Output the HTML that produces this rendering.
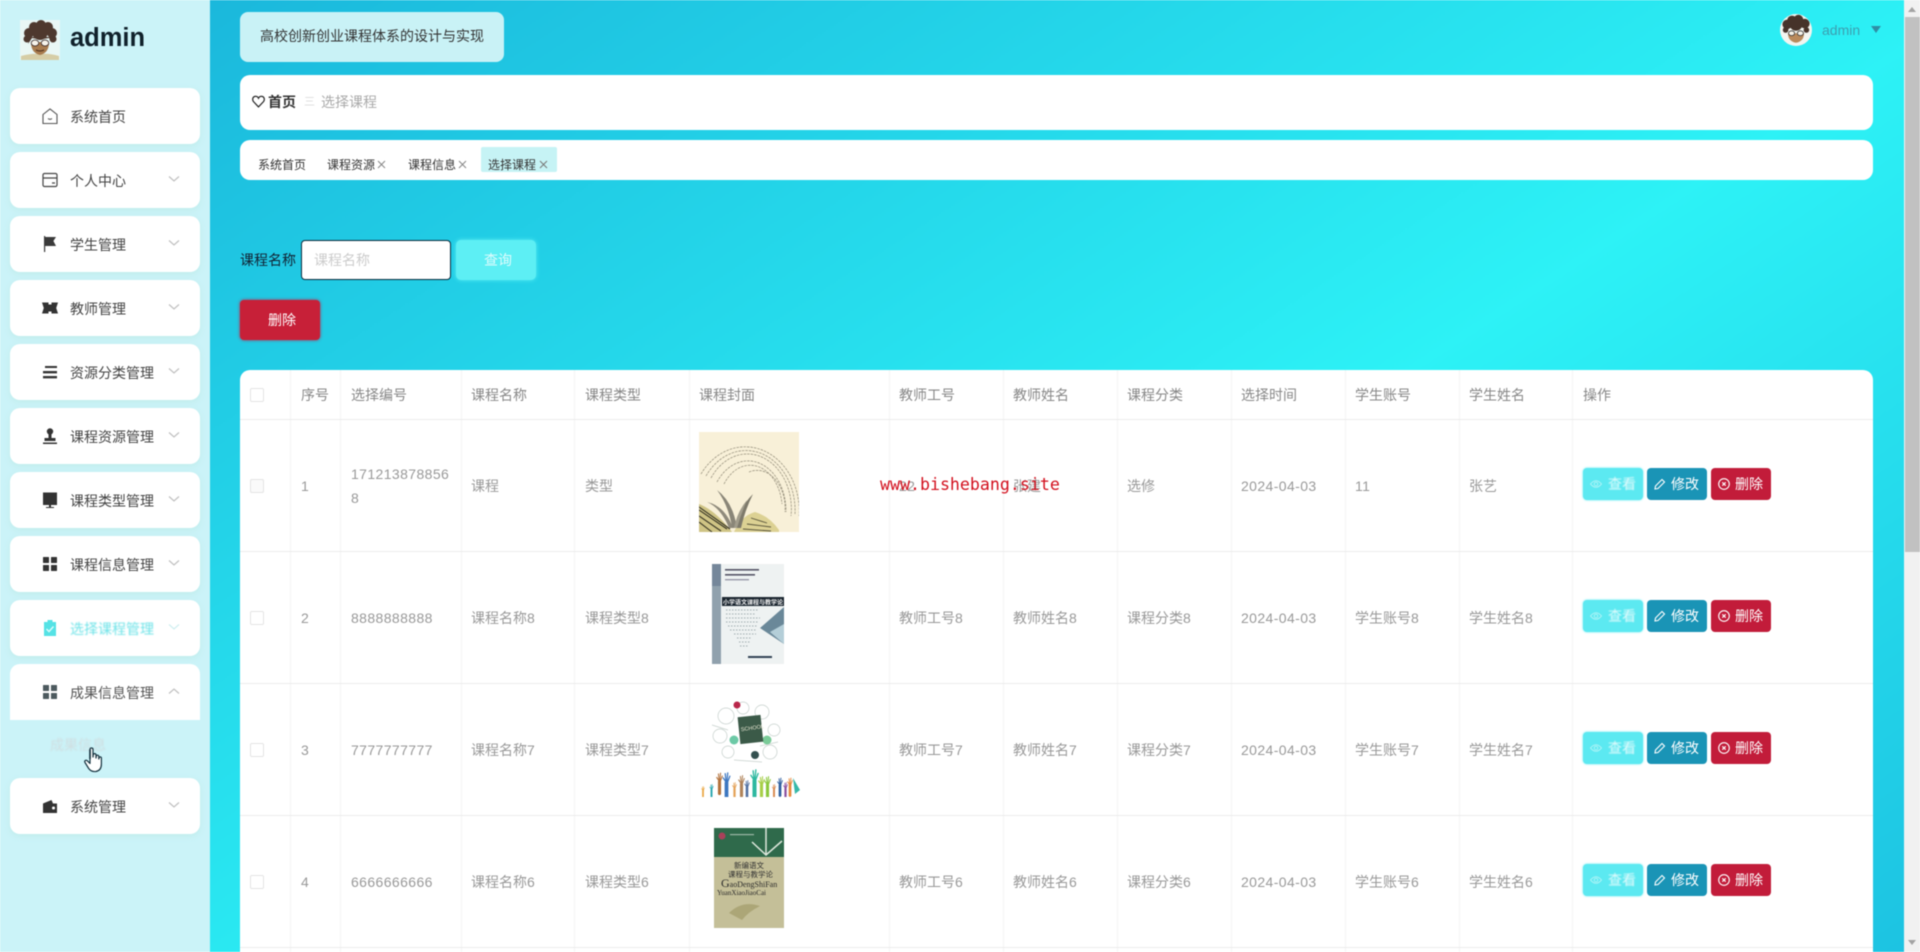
<!DOCTYPE html>
<html lang="zh-CN">
<head>
<meta charset="utf-8">
<title>选择课程</title>
<style>
html,body{margin:0;padding:0;width:1920px;height:952px;overflow:hidden;background:#fff}
*{box-sizing:border-box}
body{font-family:"Liberation Sans","Noto Sans CJK SC",sans-serif;font-size:14px;color:#333}
#wrap{position:absolute;left:0;top:0;width:1920px;height:952px;overflow:hidden;filter:blur(.45px)}
.a{position:absolute;white-space:nowrap}
#main{position:absolute;left:210px;top:0;width:1694px;height:952px;background:linear-gradient(147deg,#1bb8dc 0%,#2df2f6 56%,#1dc3e2 100%)}
#side{position:absolute;left:0;top:0;width:210px;height:952px;background:#cbf3f8}
.card{position:absolute;left:10px;width:190px;height:56px;background:#fff;border-radius:10px;box-shadow:0 2px 6px rgba(190,235,232,.8)}
.card .l{position:absolute;left:60px;top:1px;line-height:56px;color:#444;white-space:nowrap}
.card svg.i{position:absolute;left:32px;top:20px;width:16px;height:16px}
.card svg.c{position:absolute;left:158px;top:23px;width:12px;height:8px}
.panel{position:absolute;background:#fff;border-radius:10px}
.tag{position:absolute;top:157px;font-size:12px;line-height:16px;color:#333;white-space:nowrap}
.x{position:absolute;top:160px;width:9px;height:9px}
#table{position:absolute;left:240px;top:370px;width:1633px;height:582px;background:#fff;border-radius:10px 10px 0 0}
.v{position:absolute;top:0;bottom:0;width:1px;background:#f4f4f4}
.h{position:absolute;left:0;right:0;height:1px;background:#ececec}
.th{position:absolute;top:1px;line-height:49px;color:#888;white-space:nowrap}
.td{position:absolute;line-height:133px;color:#999;white-space:nowrap}
.n{letter-spacing:.4px}
.cb{position:absolute;left:10px;width:14px;height:14px;border:1px solid #e4e4e4;border-radius:2px;background:#fff}
.btn{position:absolute;width:60px;height:32px;border-radius:4px;color:#fff;line-height:32px;white-space:nowrap}
.btn svg{position:absolute;left:7px;top:10px;width:12px;height:12px}
.btn span{position:absolute;left:24px;top:0}
.b1{left:1343px;background:#5ce9f1;box-shadow:0 0 2px #5ce9f1}
.b1 span{left:25px;opacity:.85;filter:blur(.5px)}
.b2{left:1407px;background:#1a94b6}
.b3{left:1471px;background:#c21c3a}
.cover{position:absolute}
</style>
</head>
<body>
<div id="wrap">

<div id="main"></div>

<!-- sidebar -->
<div id="side">
  <svg class="a" style="left:20px;top:20px" width="40" height="40" viewBox="0 0 40 40">
    <rect width="40" height="40" fill="#e9f7f5"/>
    <path d="M1 40 V36 Q12 33 20 34 Q29 33 39 36 V40Z" fill="#d6cda6"/>
    <path d="M11 22 Q11 33 20 35 Q29 33 29 22Z" fill="#a87c4f"/>
    <g fill="#4e382e">
      <circle cx="9" cy="13" r="5"/><circle cx="14" cy="7" r="5"/><circle cx="21" cy="5" r="5"/><circle cx="28" cy="7" r="5"/><circle cx="32" cy="13" r="5"/><circle cx="20" cy="12" r="8"/>
      <circle cx="7" cy="19" r="3.500"/><circle cx="33" cy="19" r="3.500"/>
    </g>
    <path d="M8 24 12 18 Q20 20 29 18 L32 23 30 17 H10Z" fill="#4e382e"/>
    <ellipse cx="15" cy="23" rx="3.800" ry="3" fill="#f6f3ea" stroke="#322" stroke-width=".8"/>
    <ellipse cx="25" cy="23" rx="3.800" ry="3" fill="#f6f3ea" stroke="#322" stroke-width=".8"/>
    <path d="M16 30 Q20 32 24 30" stroke="#4d2f1c" fill="none"/>
  </svg>
  <div class="a" style="left:70px;top:20px;line-height:36px;font-size:25.5px;font-weight:bold;color:#10212b">admin</div>

  <div class="card" style="top:88px"><svg class="i" viewBox="0 0 16 16" fill="none" stroke="#555" stroke-width="1.100"><path d="M1 6.500 8 1l7 5.500V15.500H1z"/><path d="M6 10.500q2 1.600 4 0"/></svg><div class="l">系统首页</div></div>

  <div class="card" style="top:152px"><svg class="i" viewBox="0 0 16 16" fill="none" stroke="#444" stroke-width="1.200"><rect x="1" y="1.500" width="14" height="13" rx="1.500"/><path d="M1 6h14M10 11h3"/></svg><div class="l">个人中心</div><svg class="c" viewBox="0 0 12 8" fill="none" stroke="#c0c0c0" stroke-width="1.200"><path d="M1 1.500 6 6l5-4.500"/></svg></div>

  <div class="card" style="top:216px"><svg class="i" viewBox="0 0 16 16" fill="#3a3a3a"><path d="M2 0h1.200v16H2z"/><path d="M3 1h11l-2.600 4L14 10H3z"/></svg><div class="l">学生管理</div><svg class="c" viewBox="0 0 12 8" fill="none" stroke="#c0c0c0" stroke-width="1.200"><path d="M1 1.500 6 6l5-4.500"/></svg></div>

  <div class="card" style="top:280px"><svg class="i" viewBox="0 0 16 16" fill="#333"><path d="M0 2.500h6.500v2h3v-2H16l-1.800 5.500L16 13.500H9.500v-2h-3v2H0L1.800 8z"/></svg><div class="l">教师管理</div><svg class="c" viewBox="0 0 12 8" fill="none" stroke="#c0c0c0" stroke-width="1.200"><path d="M1 1.500 6 6l5-4.500"/></svg></div>

  <div class="card" style="top:344px"><svg class="i" viewBox="0 0 16 16" fill="#333"><path d="M3 2h12v2H3zM1 7h14v2.400H1zM1 12h14v2.400H1z"/></svg><div class="l">资源分类管理</div><svg class="c" viewBox="0 0 12 8" fill="none" stroke="#c0c0c0" stroke-width="1.200"><path d="M1 1.500 6 6l5-4.500"/></svg></div>

  <div class="card" style="top:408px"><svg class="i" viewBox="0 0 16 16" fill="#333"><circle cx="8" cy="3.500" r="3.200"/><path d="M6.500 5h3v5h4v3H2.500v-3h4zM1 14.500h14V16H1z"/></svg><div class="l">课程资源管理</div><svg class="c" viewBox="0 0 12 8" fill="none" stroke="#c0c0c0" stroke-width="1.200"><path d="M1 1.500 6 6l5-4.500"/></svg></div>

  <div class="card" style="top:472px"><svg class="i" viewBox="0 0 16 16" fill="#333"><path d="M1 .5h14V13H1zM4 15h8v1H4z"/><path d="M7 13h2v2H7z"/></svg><div class="l">课程类型管理</div><svg class="c" viewBox="0 0 12 8" fill="none" stroke="#c0c0c0" stroke-width="1.200"><path d="M1 1.500 6 6l5-4.500"/></svg></div>

  <div class="card" style="top:536px"><svg class="i" viewBox="0 0 16 16" fill="#333"><rect x="1" y="1" width="6" height="6" rx=".5"/><rect x="9" y="1" width="6" height="6" rx=".5"/><rect x="1" y="9" width="6" height="6" rx=".5"/><rect x="9" y="9" width="6" height="6" rx=".5"/></svg><div class="l">课程信息管理</div><svg class="c" viewBox="0 0 12 8" fill="none" stroke="#c0c0c0" stroke-width="1.200"><path d="M1 1.500 6 6l5-4.500"/></svg></div>

  <div class="card" style="top:600px"><svg class="i" viewBox="0 0 16 16" fill="#55e2e5"><path d="M2 2h3.500V0h5v2H14v14H2z"/><path d="M4.500 9l2.500 2.500 4.500-5" fill="none" stroke="#d8fbfb" stroke-width="1.500"/></svg><div class="l" style="color:#6ee3e8;filter:blur(.6px)">选择课程管理</div><svg class="c" viewBox="0 0 12 8" fill="none" stroke="#cfeef0" stroke-width="1.200"><path d="M1 1.500 6 6l5-4.500"/></svg></div>

  <div class="card" style="top:664px;border-radius:10px 10px 0 0;box-shadow:none"><svg class="i" viewBox="0 0 16 16" fill="#4d5a5f"><rect x="1" y="1" width="6" height="6" rx=".5"/><rect x="9" y="1" width="6" height="6" rx=".5"/><rect x="1" y="9" width="6" height="6" rx=".5"/><rect x="9" y="9" width="6" height="6" rx=".5"/></svg><div class="l" style="color:#555">成果信息管理</div><svg class="c" viewBox="0 0 12 8" fill="none" stroke="#c0c0c0" stroke-width="1.200"><path d="M1 6.500 6 2l5 4.500"/></svg></div>

  <div class="a" style="left:50px;top:735px;line-height:20px;color:#cfdde0;filter:blur(.8px)">成果信息</div>

  <div class="card" style="top:778px"><svg class="i" viewBox="0 0 16 16" fill="#333"><path d="M1 5.500 9.500 2l1.500 3.500h4V15H1z"/><circle cx="11.500" cy="10" r="1.500" fill="#fff"/></svg><div class="l">系统管理</div><svg class="c" viewBox="0 0 12 8" fill="none" stroke="#c0c0c0" stroke-width="1.200"><path d="M1 1.500 6 6l5-4.500"/></svg></div>

  <svg class="a" style="left:84px;top:747px" width="21" height="26" viewBox="0 0 21 26">
    <path d="M6 2.500Q6 1 7.500 1T9 2.500V10l.3-2.400q.2-1.100 1.400-1t1.300 1.200V11l.3-2q.3-1 1.400-.8t1.100 1.300V12l.4-1.400q.4-.9 1.300-.7t.9 1.200V17q0 6.500-5.500 7.500-4.500.6-7.200-3L1 15.500q-.7-1.300.3-2t2.200.4L6 16.500z" fill="#fff" stroke="#14323f" stroke-width="1.200" stroke-linejoin="round"/>
    <path d="M6 2.500V12" stroke="#14323f" stroke-width="1.600"/>
  </svg>
</div>

<!-- title -->
<div class="a" style="left:240px;top:12px;width:264px;height:50px;background:#c9f2f6;border-radius:8px;line-height:49px;padding-left:20px;color:#333">高校创新创业课程体系的设计与实现</div>

<!-- user -->
<svg class="a" style="left:1780px;top:14px" width="32" height="32" viewBox="0 0 40 40">
  <defs><clipPath id="cc"><circle cx="20" cy="20" r="20"/></clipPath></defs>
  <g clip-path="url(#cc)">
  <rect width="40" height="40" fill="#f3f5f0"/>
  <path d="M10 24 Q10 34 20 36 Q30 34 30 24Z" fill="#b98a5c"/>
  <g fill="#46332a"><circle cx="9" cy="13" r="6"/><circle cx="15" cy="8" r="6"/><circle cx="23" cy="7" r="6"/><circle cx="31" cy="12" r="6"/><circle cx="20" cy="13" r="8"/><circle cx="7" cy="20" r="3.500"/><circle cx="33" cy="20" r="3.500"/></g>
  <ellipse cx="14.500" cy="24" rx="3.800" ry="3" fill="#f4f1e8" stroke="#333"/>
  <ellipse cx="25.500" cy="24" rx="3.800" ry="3" fill="#f4f1e8" stroke="#333"/>
  </g>
</svg>
<div class="a" style="left:1822px;top:20px;line-height:20px;color:#3c9fb0">admin</div>
<svg class="a" style="left:1871px;top:26px" width="10" height="7" viewBox="0 0 10 7"><path d="M0 0h10L5 7z" fill="#2f8ea5"/></svg>

<!-- breadcrumb -->
<div class="panel" style="left:240px;top:75px;width:1633px;height:55px"></div>
<svg class="a" style="left:252px;top:95px" width="13" height="13" viewBox="0 0 24 24" fill="none" stroke="#222" stroke-width="2.200"><path d="M12 22 3 12.500C0 9 1 3 6 2.500c3-.3 5 1.500 6 3.500 1-2 3-3.800 6-3.500 5 .5 6 6.500 3 10z"/></svg>
<div class="a" style="left:268px;top:92px;line-height:20px;font-weight:bold;color:#333">首页</div>
<div class="a" style="left:304px;top:92px;line-height:20px;font-size:11px;color:#ddd">三</div>
<div class="a" style="left:321px;top:92px;line-height:20px;color:#aaa">选择课程</div>

<!-- tags -->
<div class="panel" style="left:240px;top:140px;width:1633px;height:40px"></div>
<div class="a" style="left:481px;top:147px;width:76px;height:25px;background:#c6f3f5;border-radius:2px"></div>
<div class="tag" style="left:258px">系统首页</div>
<div class="tag" style="left:327px">课程资源</div>
<svg class="x" style="left:377px" viewBox="0 0 9 9" stroke="#888" fill="none"><path d="M1 1l7 7M8 1 1 8"/></svg>
<div class="tag" style="left:408px">课程信息</div>
<svg class="x" style="left:458px" viewBox="0 0 9 9" stroke="#888" fill="none"><path d="M1 1l7 7M8 1 1 8"/></svg>
<div class="tag" style="left:488px">选择课程</div>
<svg class="x" style="left:539px" viewBox="0 0 9 9" stroke="#777" fill="none"><path d="M1 1l7 7M8 1 1 8"/></svg>

<!-- search -->
<div class="a" style="left:240px;top:250px;line-height:20px;color:#123">课程名称</div>
<div class="a" style="left:301px;top:240px;width:150px;height:40px;background:#fff;border:1px solid #0b2c3e;border-radius:4px;line-height:38px;padding-left:12px;color:#ccc">课程名称</div>
<div class="a" style="left:456px;top:240px;width:80px;height:40px;background:#5deff4;border-radius:5px;box-shadow:0 0 4px #5deff4;padding-left:28px;line-height:40px;color:#dffcfd">查询</div>
<div class="a" style="left:240px;top:300px;width:80px;height:40px;background:#c72038;border-radius:4px;box-shadow:0 0 3px #b02a50;padding-left:28px;line-height:40px;color:#fff">删除</div>

<!-- table -->
<div id="table">
  <div class="v" style="left:50px"></div>
  <div class="v" style="left:100px"></div>
  <div class="v" style="left:221px"></div>
  <div class="v" style="left:334px"></div>
  <div class="v" style="left:449px"></div>
  <div class="v" style="left:649px"></div>
  <div class="v" style="left:763px"></div>
  <div class="v" style="left:877px"></div>
  <div class="v" style="left:991px"></div>
  <div class="v" style="left:1105px"></div>
  <div class="v" style="left:1219px"></div>
  <div class="v" style="left:1332px"></div>
  <div class="h" style="top:49px"></div>
  <div class="h" style="top:181px"></div>
  <div class="h" style="top:313px"></div>
  <div class="h" style="top:445px"></div>
  <div class="h" style="top:577px"></div>

  <div class="cb" style="top:18px"></div>
  <div class="th" style="left:61px">序号</div>
  <div class="th" style="left:111px">选择编号</div>
  <div class="th" style="left:231px">课程名称</div>
  <div class="th" style="left:345px">课程类型</div>
  <div class="th" style="left:459px">课程封面</div>
  <div class="th" style="left:659px">教师工号</div>
  <div class="th" style="left:773px">教师姓名</div>
  <div class="th" style="left:887px">课程分类</div>
  <div class="th" style="left:1001px">选择时间</div>
  <div class="th" style="left:1115px">学生账号</div>
  <div class="th" style="left:1229px">学生姓名</div>
  <div class="th" style="left:1343px">操作</div>

  <!-- row 1 -->
  <div class="cb" style="top:109px;background:#fafafa"></div>
  <div class="td n" style="left:61px;top:50px">1</div>
  <div class="td n" style="left:111px;top:92px;line-height:24px">171213878856<br>8</div>
  <div class="td" style="left:231px;top:50px">课程</div>
  <div class="td" style="left:345px;top:50px">类型</div>
  <svg class="cover" style="left:459px;top:62px" width="100" height="100" viewBox="0 0 100 100">
    <rect width="100" height="100" fill="#f8f0d8"/>
    <g fill="none" stroke="#77715f" stroke-width=".7" stroke-dasharray="2.500 1" opacity=".8">
      <path d="M2 42A54 64 0 0 1 100 84"/>
      <path d="M7 44A49 60 0 0 1 96 82"/>
      <path d="M12 46A44 55 0 0 1 92 84"/>
      <path d="M18 50A38 50 0 0 1 87 80"/>
      <path d="M25 52A32 44 0 0 1 83 72"/>
      <path d="M50 40A28 38 0 0 1 86 80"/>
    </g>
    <path d="M0 72 Q16 78 33 100 H0Z" fill="#cfc485"/>
    <path d="M0 78 L28 97M0 84 L22 99M0 90 L13 100M0 75 L31 97" stroke="#3b3826" stroke-width="1.100"/>
    <path d="M35 100 Q42 84 56 80 Q70 84 80 98 V100Z" fill="#dcd193"/>
    <path d="M44 97 L72 99M48 92 L72 95M52 86 L68 91" stroke="#57533a" stroke-width=".9"/>
    <path d="M8 70 Q22 76 30 96 L34 96 Q26 74 8 70Z" fill="#8f8a7b"/>
    <path d="M18 58 Q30 74 33 96 L38 96 Q34 70 18 58Z" fill="#8a8678"/>
    <path d="M54 62 Q40 76 36 96 L42 96 Q46 78 54 62Z" fill="#7e7a6b"/>
    <path d="M48 68 Q38 80 35 96 L38 96 Q42 82 48 68Z" fill="#a29d8c"/>
  </svg>
  <div class="td n" style="left:659px;top:50px">22</div>
  <div class="td" style="left:773px;top:50px">张建</div>
  <div class="td" style="left:887px;top:50px">选修</div>
  <div class="td n" style="left:1001px;top:50px">2024-04-03</div>
  <div class="td n" style="left:1115px;top:50px">11</div>
  <div class="td" style="left:1229px;top:50px">张艺</div>

  <!-- row 2 -->
  <div class="cb" style="top:241px"></div>
  <div class="td n" style="left:61px;top:182px">2</div>
  <div class="td n" style="left:111px;top:182px">8888888888</div>
  <div class="td" style="left:231px;top:182px">课程名称8</div>
  <div class="td" style="left:345px;top:182px">课程类型8</div>
  <svg class="cover" style="left:472px;top:194px" width="72" height="100" viewBox="0 0 72 100">
    <rect width="72" height="100" fill="#eef2f2"/>
    <path d="M0 0H9V100H0Z" fill="#90a1ad"/>
    <rect y="0" width="9" height="22" fill="#75879a"/>
    <rect x="13" y="5" width="34" height="1.600" fill="#556"/>
    <rect x="13" y="10" width="30" height="1.600" fill="#556"/>
    <rect x="13" y="15" width="24" height="1.400" fill="#99a"/>
    <rect x="10" y="33" width="62" height="9" fill="#1b2630"/>
    <text x="11" y="40.500" font-size="6" font-weight="bold" fill="#ededed" font-family="'Noto Sans CJK SC',sans-serif">小学语文课程与教学论</text>
    <path d="M72 43 L48 64 L72 80Z" fill="#6a8899"/>
    <path d="M72 60 L58 68 L72 80Z" fill="#b4ced8"/>
    <g fill="none" stroke="#a0abb0" stroke-dasharray="1.500 1.500" stroke-width=".9"><path d="M14 46H46M14 50H44M14 54H48M14 58H46M16 62H46M18 66H44M22 70H44M25 74H40M27 78H38M28 82H37"/></g>
    <rect x="36" y="92" width="24" height="2" fill="#345"/>
  </svg>
  <div class="td" style="left:659px;top:182px">教师工号8</div>
  <div class="td" style="left:773px;top:182px">教师姓名8</div>
  <div class="td" style="left:887px;top:182px">课程分类8</div>
  <div class="td n" style="left:1001px;top:182px">2024-04-03</div>
  <div class="td" style="left:1115px;top:182px">学生账号8</div>
  <div class="td" style="left:1229px;top:182px">学生姓名8</div>

  <!-- row 3 -->
  <div class="cb" style="top:373px"></div>
  <div class="td n" style="left:61px;top:314px">3</div>
  <div class="td n" style="left:111px;top:314px">7777777777</div>
  <div class="td" style="left:231px;top:314px">课程名称7</div>
  <div class="td" style="left:345px;top:314px">课程类型7</div>
  <svg class="cover" style="left:458px;top:330px" width="102" height="98" viewBox="0 0 102 98">
    <defs>
      <symbol id="hd" viewBox="0 0 10 30"><g stroke="currentColor" fill="none" stroke-linecap="round"><path d="M5 30V13" stroke-width="4.500"/><path d="M5 13 1 7M4.500 12 3.500 2M5.500 12 6.500 1M6 13 9 5" stroke-width="1.500"/></g></symbol>
    </defs>
    <g fill="none" stroke="#c6d0cc" stroke-width=".7">
      <circle cx="28" cy="16" r="8"/><circle cx="64" cy="12" r="7"/><circle cx="22" cy="36" r="7"/><circle cx="76" cy="30" r="6"/><circle cx="30" cy="52" r="6"/><circle cx="72" cy="52" r="7"/><circle cx="45" cy="8" r="6"/>
      <path d="M14 25 30 30M62 46 80 42M36 60 64 62"/>
    </g>
    <circle cx="39" cy="5" r="3.500" fill="#b9264a"/>
    <circle cx="36" cy="40" r="4.500" fill="#6cc9a6"/>
    <circle cx="69" cy="40" r="4.500" fill="#7acb98"/>
    <circle cx="57" cy="55" r="4" fill="#34504f"/>
    <rect x="41" y="16" width="23" height="27" fill="#3b5a48" transform="rotate(-6 52 30)"/>
    <text x="43" y="30" font-size="5.500" fill="#e5e5d0" font-family="'Liberation Sans',sans-serif" transform="rotate(-8 52 30)">SCHOOL</text>
    <use href="#hd" x="1" y="86" width="8" height="11" style="color:#e8a33a"/>
    <use href="#hd" x="10" y="84" width="7" height="13" style="color:#2ca7b0"/>
    <use href="#hd" x="18" y="70" width="7" height="26" style="color:#b3723c"/>
    <use href="#hd" x="24" y="72" width="9" height="25" style="color:#3c76c0"/>
    <use href="#hd" x="33" y="82" width="7" height="15" style="color:#e4a258"/>
    <use href="#hd" x="40" y="74" width="7" height="23" style="color:#b0845a"/>
    <use href="#hd" x="46" y="80" width="6" height="17" style="color:#4f6fa0"/>
    <use href="#hd" x="52" y="68" width="9" height="29" style="color:#2eb8a0"/>
    <use href="#hd" x="60" y="76" width="7" height="21" style="color:#a8cf48"/>
    <use href="#hd" x="66" y="76" width="7" height="21" style="color:#8cc83c"/>
    <use href="#hd" x="73" y="84" width="6" height="13" style="color:#d98a50"/>
    <use href="#hd" x="79" y="76" width="6" height="21" style="color:#2d5d9e"/>
    <use href="#hd" x="85" y="82" width="5" height="15" style="color:#8a4f9e"/>
    <use href="#hd" x="89" y="76" width="6" height="21" style="color:#e8883a"/>
    <path d="M95 78 L102 90 L97 94Z" fill="#36b8a8"/>
  </svg>
  <div class="td" style="left:659px;top:314px">教师工号7</div>
  <div class="td" style="left:773px;top:314px">教师姓名7</div>
  <div class="td" style="left:887px;top:314px">课程分类7</div>
  <div class="td n" style="left:1001px;top:314px">2024-04-03</div>
  <div class="td" style="left:1115px;top:314px">学生账号7</div>
  <div class="td" style="left:1229px;top:314px">学生姓名7</div>

  <!-- row 4 -->
  <div class="cb" style="top:505px"></div>
  <div class="td n" style="left:61px;top:446px">4</div>
  <div class="td n" style="left:111px;top:446px">6666666666</div>
  <div class="td" style="left:231px;top:446px">课程名称6</div>
  <div class="td" style="left:345px;top:446px">课程类型6</div>
  <svg class="cover" style="left:474px;top:458px" width="70" height="100" viewBox="0 0 70 100">
    <rect width="70" height="100" fill="#c4bf98"/>
    <rect width="70" height="29" fill="#2f6a4b"/>
    <circle cx="8" cy="8" r="3.500" fill="#a8415a"/>
    <rect x="16" y="6" width="24" height="1.200" fill="#9bb8a6"/>
    <path d="M52 0V26M38 14 52 27 68 13" fill="none" stroke="#dfe8dd" stroke-width="1.500"/>
    <text x="20" y="40" font-size="7.500" fill="#333" font-family="'Noto Sans CJK SC',sans-serif">新编语文</text>
    <text x="14" y="49" font-size="7.500" fill="#333" font-family="'Noto Sans CJK SC',sans-serif">课程与教学论</text>
    <text x="7" y="59" font-size="8" fill="#2a2a2a" font-family="'Liberation Serif',serif"><tspan font-size="12">G</tspan>aoDengShiFan</text>
    <text x="3" y="67" font-size="7" fill="#2a2a2a" font-family="'Liberation Serif',serif">YuanXiaoJiaoCai</text>
    <path d="M15 85 Q28 72 46 78 Q34 84 28 92Z" fill="#aca677"/>
  </svg>
  <div class="td" style="left:659px;top:446px">教师工号6</div>
  <div class="td" style="left:773px;top:446px">教师姓名6</div>
  <div class="td" style="left:887px;top:446px">课程分类6</div>
  <div class="td n" style="left:1001px;top:446px">2024-04-03</div>
  <div class="td" style="left:1115px;top:446px">学生账号6</div>
  <div class="td" style="left:1229px;top:446px">学生姓名6</div>

  <!-- buttons row 1 -->
  <div class="btn b1" style="top:98px"><svg viewBox="0 0 12 12" fill="none" stroke="#a9f3f6" stroke-width="1"><path d="M.5 6Q6-.5 11.500 6 6 12.500.5 6z"/><circle cx="6" cy="6" r="1.800"/></svg><span>查看</span></div>
  <div class="btn b2" style="top:98px"><svg viewBox="0 0 12 12" fill="none" stroke="#fff" stroke-width="1.100"><path d="M1 11 1.500 8 8 1.500 10.500 4 4 10.500z"/></svg><span>修改</span></div>
  <div class="btn b3" style="top:98px"><svg viewBox="0 0 12 12" fill="none" stroke="#fff" stroke-width="1.100"><circle cx="6" cy="6" r="5.300"/><path d="M4.300 4.300l3.400 3.400M7.700 4.300 4.300 7.700"/></svg><span>删除</span></div>
  <!-- buttons row 2 -->
  <div class="btn b1" style="top:230px"><svg viewBox="0 0 12 12" fill="none" stroke="#a9f3f6" stroke-width="1"><path d="M.5 6Q6-.5 11.500 6 6 12.500.5 6z"/><circle cx="6" cy="6" r="1.800"/></svg><span>查看</span></div>
  <div class="btn b2" style="top:230px"><svg viewBox="0 0 12 12" fill="none" stroke="#fff" stroke-width="1.100"><path d="M1 11 1.500 8 8 1.500 10.500 4 4 10.500z"/></svg><span>修改</span></div>
  <div class="btn b3" style="top:230px"><svg viewBox="0 0 12 12" fill="none" stroke="#fff" stroke-width="1.100"><circle cx="6" cy="6" r="5.300"/><path d="M4.300 4.300l3.400 3.400M7.700 4.300 4.300 7.700"/></svg><span>删除</span></div>
  <!-- buttons row 3 -->
  <div class="btn b1" style="top:362px"><svg viewBox="0 0 12 12" fill="none" stroke="#a9f3f6" stroke-width="1"><path d="M.5 6Q6-.5 11.500 6 6 12.500.5 6z"/><circle cx="6" cy="6" r="1.800"/></svg><span>查看</span></div>
  <div class="btn b2" style="top:362px"><svg viewBox="0 0 12 12" fill="none" stroke="#fff" stroke-width="1.100"><path d="M1 11 1.500 8 8 1.500 10.500 4 4 10.500z"/></svg><span>修改</span></div>
  <div class="btn b3" style="top:362px"><svg viewBox="0 0 12 12" fill="none" stroke="#fff" stroke-width="1.100"><circle cx="6" cy="6" r="5.300"/><path d="M4.300 4.300l3.400 3.400M7.700 4.300 4.300 7.700"/></svg><span>删除</span></div>
  <!-- buttons row 4 -->
  <div class="btn b1" style="top:494px"><svg viewBox="0 0 12 12" fill="none" stroke="#a9f3f6" stroke-width="1"><path d="M.5 6Q6-.5 11.500 6 6 12.500.5 6z"/><circle cx="6" cy="6" r="1.800"/></svg><span>查看</span></div>
  <div class="btn b2" style="top:494px"><svg viewBox="0 0 12 12" fill="none" stroke="#fff" stroke-width="1.100"><path d="M1 11 1.500 8 8 1.500 10.500 4 4 10.500z"/></svg><span>修改</span></div>
  <div class="btn b3" style="top:494px"><svg viewBox="0 0 12 12" fill="none" stroke="#fff" stroke-width="1.100"><circle cx="6" cy="6" r="5.300"/><path d="M4.300 4.300l3.400 3.400M7.700 4.300 4.300 7.700"/></svg><span>删除</span></div>
</div>

<!-- watermark -->
<div class="a" style="left:880px;top:473px;line-height:24px;font-family:'DejaVu Sans Mono','Liberation Mono',monospace;font-size:16.600px;color:#d3101e">www.bishebang.site</div>

<!-- scrollbar -->
<div class="a" style="left:1904px;top:0;width:16px;height:952px;background:#f1f1f1"></div>
<div class="a" style="left:1905px;top:17px;width:15px;height:535px;background:#c1c1c1"></div>
<svg class="a" style="left:1907px;top:6px" width="10" height="6" viewBox="0 0 10 6"><path d="M1 6 5 1l4 5z" fill="#a3a3a3"/></svg>
<svg class="a" style="left:1907px;top:940px" width="10" height="6" viewBox="0 0 10 6"><path d="M1 0 5 5l4-5z" fill="#a3a3a3"/></svg>

</div>
</body>
</html>
